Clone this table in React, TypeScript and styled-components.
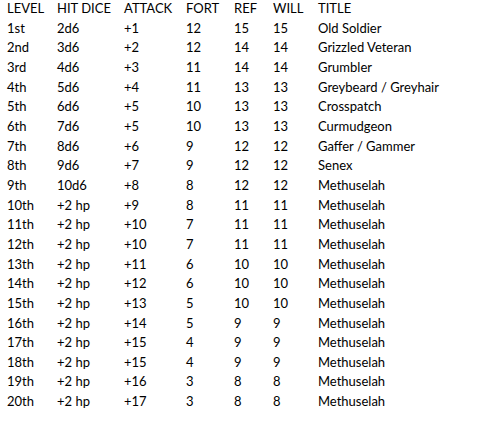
import styled, { createGlobalStyle } from "styled-components";

const GlobalStyle = createGlobalStyle`
  html, body {
    margin: 0;
    padding: 0;
    background: #ffffff;
  }
`;

const Sheet = styled.div`
  width: 480px;
  height: 438px;
  padding: 0 0 0 7px;
  box-sizing: border-box;
  font-family: Lato, "Liberation Sans", sans-serif;
  font-size: 13px;
  color: #000;
  overflow: hidden;
`;

const Row = styled.div`
  display: grid;
  grid-template-columns: 50px 67px 62px 48px 39px 45px 1fr;
  height: 19.67px;
  align-items: start;
  line-height: 17px;
  white-space: nowrap;
`;

const Cell = styled.div``;

const levels: [string, string, string, string, string, string, string][] = [
  ["1st", "2d6", "+1", "12", "15", "15", "Old Soldier"],
  ["2nd", "3d6", "+2", "12", "14", "14", "Grizzled Veteran"],
  ["3rd", "4d6", "+3", "11", "14", "14", "Grumbler"],
  ["4th", "5d6", "+4", "11", "13", "13", "Greybeard / Greyhair"],
  ["5th", "6d6", "+5", "10", "13", "13", "Crosspatch"],
  ["6th", "7d6", "+5", "10", "13", "13", "Curmudgeon"],
  ["7th", "8d6", "+6", "9", "12", "12", "Gaffer / Gammer"],
  ["8th", "9d6", "+7", "9", "12", "12", "Senex"],
  ["9th", "10d6", "+8", "8", "12", "12", "Methuselah"],
  ["10th", "+2 hp", "+9", "8", "11", "11", "Methuselah"],
  ["11th", "+2 hp", "+10", "7", "11", "11", "Methuselah"],
  ["12th", "+2 hp", "+10", "7", "11", "11", "Methuselah"],
  ["13th", "+2 hp", "+11", "6", "10", "10", "Methuselah"],
  ["14th", "+2 hp", "+12", "6", "10", "10", "Methuselah"],
  ["15th", "+2 hp", "+13", "5", "10", "10", "Methuselah"],
  ["16th", "+2 hp", "+14", "5", "9", "9", "Methuselah"],
  ["17th", "+2 hp", "+15", "4", "9", "9", "Methuselah"],
  ["18th", "+2 hp", "+15", "4", "9", "9", "Methuselah"],
  ["19th", "+2 hp", "+16", "3", "8", "8", "Methuselah"],
  ["20th", "+2 hp", "+17", "3", "8", "8", "Methuselah"],
];

const header = ["LEVEL", "HIT DICE", "ATTACK", "FORT", "REF", "WILL", "TITLE"];

export default function App() {
  return (
    <>
      <GlobalStyle />
      <Sheet>
        <Row>
          {header.map((h) => (
            <Cell key={h}>{h}</Cell>
          ))}
        </Row>
        {levels.map((row) => (
          <Row key={row[0]}>
            {row.map((v, i) => (
              <Cell key={i}>{v}</Cell>
            ))}
          </Row>
        ))}
      </Sheet>
    </>
  );
}
